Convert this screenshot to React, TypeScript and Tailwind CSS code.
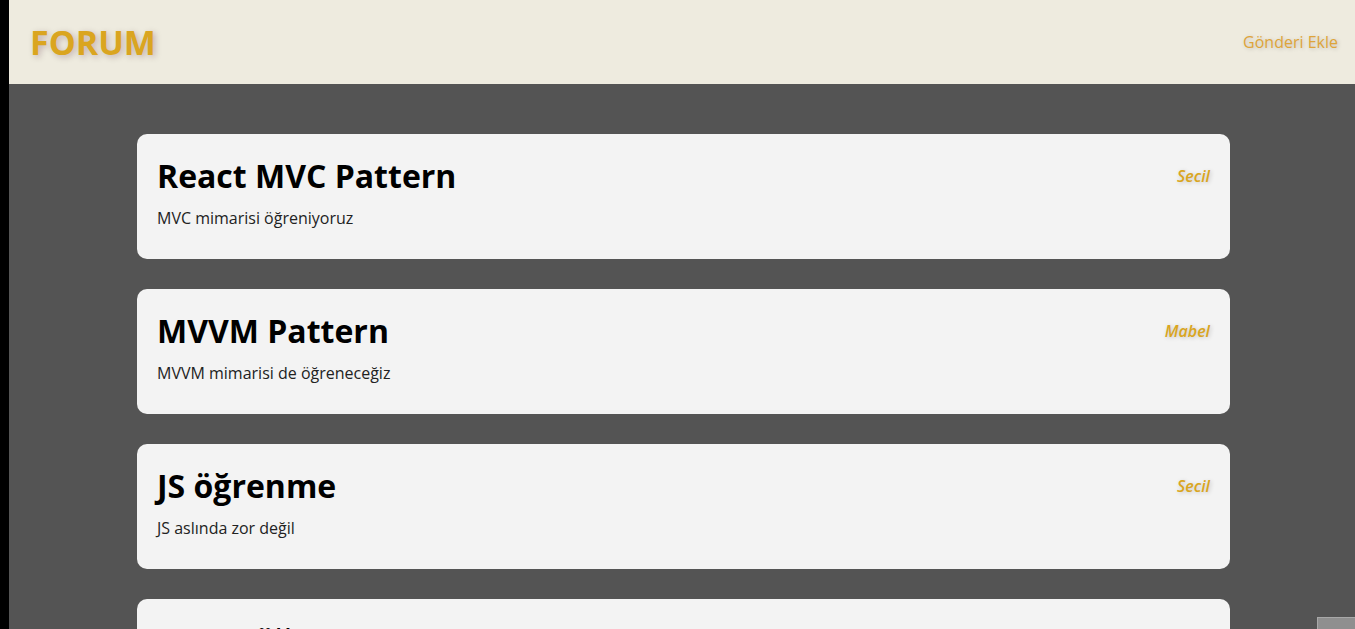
import React from 'react';

interface Post {
  id: number;
  title: string;
  body: string;
  author: string;
}

const posts: Post[] = [
  { id: 1, title: 'React MVC Pattern', body: 'MVC mimarisi öğreniyoruz', author: 'Secil' },
  { id: 2, title: 'MVVM Pattern', body: 'MVVM mimarisi de öğreneceğiz', author: 'Mabel' },
  { id: 3, title: 'JS öğrenme', body: 'JS aslında zor değil', author: 'Secil' },
  { id: 4, title: 'React öğrenme', body: 'React ile bileşen yazıyoruz', author: 'Mabel' },
];

// Forum ana sayfası: üstte başlık çubuğu, altta gönderi kartları
export default function App() {
  return (
    <div className="flex min-h-[629px] h-[629px] overflow-hidden bg-black font-['Open_Sans',sans-serif]">
      <div className="w-[9px] shrink-0 bg-black" />
      <div className="flex-1 flex flex-col bg-[#545454] relative">
        <header className="h-[84px] shrink-0 bg-[#eeebdf] flex items-center justify-between pl-[21px] pr-[17px]">
          <h1 className="text-[34px] font-bold text-[#daa520] [text-shadow:2px_2px_6px_rgba(60,0,30,0.25)] leading-none">
            FORUM
          </h1>
          <a href="#" className="text-base text-[#dea43a] [text-shadow:1px_1px_4px_rgba(0,0,0,0.2)]">
            Gönderi Ekle
          </a>
        </header>
        <main className="flex flex-col gap-[30px] pt-[50px] pl-[128px]">
          {posts.map(post => (
            <div key={post.id} className="w-[1093px] shrink-0 bg-[#f3f3f3] rounded-[10px] px-5 pt-5 pb-[30px]">
              <div className="flex items-center justify-between h-[44px]">
                <h2 className="text-[32px] font-bold text-black leading-[44px]">{post.title}</h2>
                <span className="text-base font-semibold italic text-[#daa520] [text-shadow:1px_1px_4px_rgba(0,0,0,0.2)]">
                  {post.author}
                </span>
              </div>
              <p className="mt-[9px] text-base leading-[22px] text-[#222]">{post.body}</p>
            </div>
          ))}
        </main>
        <div className="absolute left-[1308px] top-[617px] w-[40px] h-[14px] bg-[#8f8f8f] border border-[#a8a8a8]" />
      </div>
    </div>
  );
}
